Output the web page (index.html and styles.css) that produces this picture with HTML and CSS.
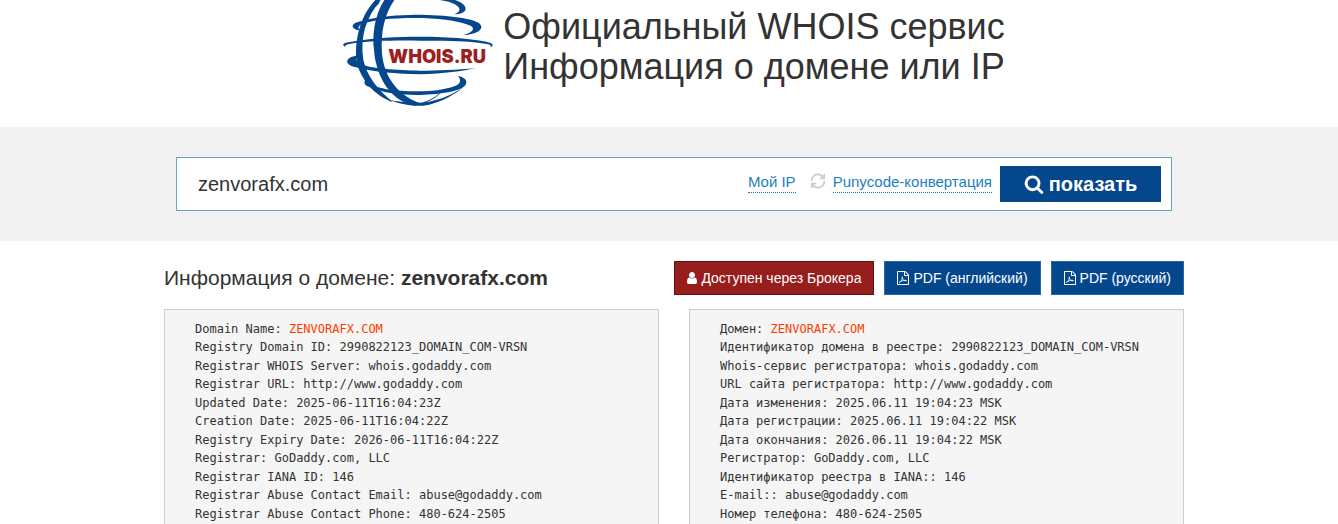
FILE: index.html
```
<!DOCTYPE html>
<html lang="ru">
<head>
    <meta charset="UTF-8">
    <meta name="viewport" content="width=device-width, initial-scale=1">
    <title>zenvorafx.com - WHOIS сервис</title>
    <link rel="stylesheet" href="styles.css">
</head>
<body>
    <svg class="sprite" aria-hidden="true">
        <symbol id="icon-pdf" viewBox="0 0 1536 1792">
            <path d="M1468 380q28 28 48 76t20 88v1152q0 40-28 68t-68 28h-1344q-40 0-68-28t-28-68v-1600q0-40 28-68t68-28h896q40 0 88 20t76 48zm-444-244v376h376q-10-29-22-41l-313-313q-12-12-41-22zm384 1528v-1024h-416q-40 0-68-28t-28-68v-416h-768v1536h1280z"/>
            <path d="M330 1480C470 1400 640 1130 700 860C730 700 640 700 660 850C700 1050 860 1250 1150 1270C1270 1260 1230 1190 1090 1185C850 1190 600 1250 380 1370C280 1440 290 1500 330 1480Z" fill="none" stroke="currentColor" stroke-width="110"/>
        </symbol>
    </svg>

    <header class="header">
        <div class="container">
            <a class="logo" href="#">
                <svg viewBox="9 0 450 318" role="img" aria-label="WHOIS.RU">
                    <g class="globe">
                        <path d="M300 0H345C372 8 385 26 372 35C364 41 354 42 343 43C358 37 364 28 352 18C340 8 320 3 300 0Z"/>
                        <path d="M62 92C30 88 30 70 62 64C110 48 180 45 225 44C330 45 390 54 415 68C440 85 410 104 370 105C400 98 408 84 388 76C350 60 290 54 225 54C150 54 100 60 66 72C54 78 52 86 62 92Z"/>
                        <path d="M16 141C5 135 8 130 25 127C100 112 170 110 240 110C330 110 420 118 450 128C460 131 460 138 452 141C454 133 445 133 435 131C370 121 300 122 240 122C160 121 80 122 28 132C18 134 14 136 16 141Z"/>
                        <path d="M58 166C15 170 8 194 48 202C100 216 170 222 240 223C310 221 370 213 408 204C350 210 290 212 240 212C170 210 90 206 62 192C44 184 46 174 58 166Z"/>
                        <path d="M92 232C68 240 66 254 90 262C130 280 190 286 240 285C310 283 360 272 374 258C386 244 376 232 354 228C366 242 360 252 345 258C310 270 270 274 240 274C180 274 120 268 96 254C86 248 86 240 92 232Z"/>
                        <path d="M106 0C58 50 41 130 51 190C62 235 100 287 160 307C112 270 80 225 70 180C60 110 77 55 122 0Z"/>
                        <path d="M133 0C103 45 96 110 102 150C106 210 138 300 225 317L240 310C172 285 132 230 126 160C122 100 132 45 163 0Z"/>
                        <path d="M150 300C190 318 250 322 275 312C310 303 350 280 370 262C335 285 300 300 262 306C230 311 200 308 150 300Z"/>
                        <path class="thin" d="M250 308C280 298 298 284 305 272M92 22C104 24 114 16 118 4"/>
                    </g>
                    <text class="logo-text" x="145" y="188">WHOIS.RU</text>
                </svg>
            </a>
            <h1>Официальный WHOIS сервис<br>Информация о домене или IP</h1>
        </div>
    </header>

    <div class="search">
        <div class="container">
            <form class="search-form">
                <input class="search-input" type="text" aria-label="Домен или IP" value="zenvorafx.com">
                <a class="dotted" href="#">Мой IP</a>
                <svg class="refresh" viewBox="0 0 18 18" aria-hidden="true">
                    <path d="M2 9A7 7 0 0 1 15 5M16 9A7 7 0 0 1 3 13M16 1V6H11M2 17V12H7"/>
                </svg>
                <a class="dotted" href="#">Punycode-конвертация</a>
                <button class="search-btn" type="submit">
                    <svg viewBox="0 0 1792 1792" aria-hidden="true"><path d="M1216 832q0-185-131.5-316.5t-316.5-131.5-316.5 131.5-131.5 316.5 131.5 316.5 316.5 131.5 316.5-131.5 131.5-316.5zm512 832q0 52-38 90t-90 38q-54 0-90-38l-343-342q-179 124-399 124-143 0-273.5-55.5t-225-150-150-225-55.5-273.5 55.5-273.5 150-225 225-150 273.5-55.5 273.5 55.5 225 150 150 225 55.5 273.5q0 220-124 399l343 343q37 37 37 90z"/></svg>
                    показать
                </button>
            </form>
        </div>
    </div>

    <main class="container">
        <div class="title-row">
            <h2>Информация о домене: <b>zenvorafx.com</b></h2>
            <div class="buttons">
                <a class="btn btn-red" href="#">
                    <svg class="user" viewBox="256 0 1280 1792" aria-hidden="true"><path d="M1536 1399q0 109-62.5 187t-150.5 78h-854q-88 0-150.5-78t-62.5-187q0-85 8.5-160.5t31.5-152 58.5-131 94-89 134.5-34.5q131 128 313 128t313-128q76 0 134.5 34.5t94 89 58.5 131 31.5 152 8.5 160.5zm-256-887q0 159-112.5 271.5t-271.5 112.5-271.5-112.5-112.5-271.5 112.5-271.5 271.5-112.5 271.5 112.5 112.5 271.5z"/></svg>
                    Доступен через Брокера
                </a>
                <a class="btn" href="#"><svg class="pdf" aria-hidden="true"><use href="#icon-pdf"/></svg>PDF (английский)</a>
                <a class="btn" href="#"><svg class="pdf" aria-hidden="true"><use href="#icon-pdf"/></svg>PDF (русский)</a>
            </div>
        </div>

        <div class="columns">
            <ul class="raw">
                <li>Domain Name: <span class="domain">ZENVORAFX.COM</span></li>
                <li>Registry Domain ID: 2990822123_DOMAIN_COM-VRSN</li>
                <li>Registrar WHOIS Server: whois.godaddy.com</li>
                <li>Registrar URL: http://www.godaddy.com</li>
                <li>Updated Date: 2025-06-11T16:04:23Z</li>
                <li>Creation Date: 2025-06-11T16:04:22Z</li>
                <li>Registry Expiry Date: 2026-06-11T16:04:22Z</li>
                <li>Registrar: GoDaddy.com, LLC</li>
                <li>Registrar IANA ID: 146</li>
                <li>Registrar Abuse Contact Email: abuse@godaddy.com</li>
                <li>Registrar Abuse Contact Phone: 480-624-2505</li>
            </ul>
            <ul class="raw">
                <li>Домен: <span class="domain">ZENVORAFX.COM</span></li>
                <li>Идентификатор домена в реестре: 2990822123_DOMAIN_COM-VRSN</li>
                <li>Whois-сервис регистратора: whois.godaddy.com</li>
                <li>URL сайта регистратора: http://www.godaddy.com</li>
                <li>Дата изменения: 2025.06.11 19:04:23 MSK</li>
                <li>Дата регистрации: 2025.06.11 19:04:22 MSK</li>
                <li>Дата окончания: 2026.06.11 19:04:22 MSK</li>
                <li>Регистратор: GoDaddy.com, LLC</li>
                <li>Идентификатор реестра в IANA:: 146</li>
                <li>E-mail:: abuse@godaddy.com</li>
                <li>Номер телефона: 480-624-2505</li>
            </ul>
        </div>
    </main>
</body>
</html>
```
FILE: styles.css
```
*{
    margin:0;
    padding:0;
    box-sizing: border-box;
}
body{
    padding-left:10px;
    font-family: "Liberation Sans", Arial, sans-serif;
    font-size:14px;
    line-height: 20px;
    color:#333;
    background: #fff;
}
.sprite{
    display:none;
}
.container{
    max-width:1020px;
    margin:0 auto;
}

/* шапка */
.header{
    padding-bottom:21px;
}
.header .container{
    display:flex;
    justify-content: center;
    gap:10px;
}
.logo svg{
    display:block;
    width:150px;
    height:106px;
}
.globe{
    fill:#05478d;
}
.globe .thin{
    fill:none;
    stroke:#05478d;
    stroke-width:3;
}
.logo-text{
    font-family: Inter, "Liberation Sans", sans-serif;
    font-size:55px;
    font-weight:900;
    fill:#9e1f1f;
}
.header h1{
    padding-top:7px;
    font-size:36px;
    line-height:40px;
    font-weight:normal;
}

/* поиск */
.search{
    margin-left:-10px;
    padding:30px 12px 30px 22px;
    background: #f2f2f2;
}
.search .container{
    max-width:996px;
}
.search-form{
    display:flex;
    align-items: center;
    padding:8px 10px;
    border:1px solid #60a5c8;
    background: #fff;
}
.search-input{
    flex:1;
    min-width:0;
    height:36px;
    padding-left:11px;
    border:0;
    outline:0;
    font-family: inherit;
    font-size:20px;
    color:#333;
}
.dotted{
    margin-bottom:4px;
    border-bottom:1px dotted #0e76b7;
    font-size:15px;
    color:#1b7fbd;
    text-decoration: none;
}
.refresh{
    width:16px;
    height:16px;
    margin:0 7px 6px 14px;
    fill:none;
    stroke:#ccc;
    stroke-width:2;
}
.search-btn{
    display:flex;
    align-items: center;
    justify-content: center;
    gap:5px;
    width:161px;
    height:36px;
    margin-left:8px;
    border:0;
    font-family: inherit;
    font-size:20px;
    font-weight:bold;
    color:#fff;
    background: #05478d;
    cursor:pointer;
}
.search-btn svg{
    width:20px;
    height:20px;
    fill:#fff;
}

/* заголовок и кнопки */
.title-row{
    display:flex;
    flex-wrap: wrap;
    align-items: center;
    justify-content: space-between;
    padding:20px 0 14px;
}
.title-row h2{
    font-size:21px;
    line-height:24px;
    font-weight:normal;
}
.buttons{
    display:flex;
    gap:10px;
}
.btn{
    display:flex;
    align-items: center;
    gap:4px;
    padding:6px 12px;
    border:1px solid #2369a8;
    color:#fff;
    background: #05478d;
    text-decoration: none;
    white-space: nowrap;
}
.btn-red{
    border-color:#5f1010;
    background: #981e1e;
}
.btn svg{
    height:14px;
    color:#fff;
    fill:#fff;
}
.btn .user{
    width:10px;
}
.btn .pdf{
    width:12px;
}

/* данные whois */
.columns{
    display:grid;
    grid-template-columns: 1fr 1fr;
    gap:30px;
}
.raw{
    padding:10px 30px;
    border:1px solid #ccc;
    background: #f5f5f5;
    list-style: none;
    font-family: Consolas, "DejaVu Sans Mono", monospace;
    font-size:12px;
    line-height:18px;
    overflow-wrap: anywhere;
}
.raw li:nth-child(even){
    line-height:19px;
}
.domain{
    color:#ff3c00;
}
```
